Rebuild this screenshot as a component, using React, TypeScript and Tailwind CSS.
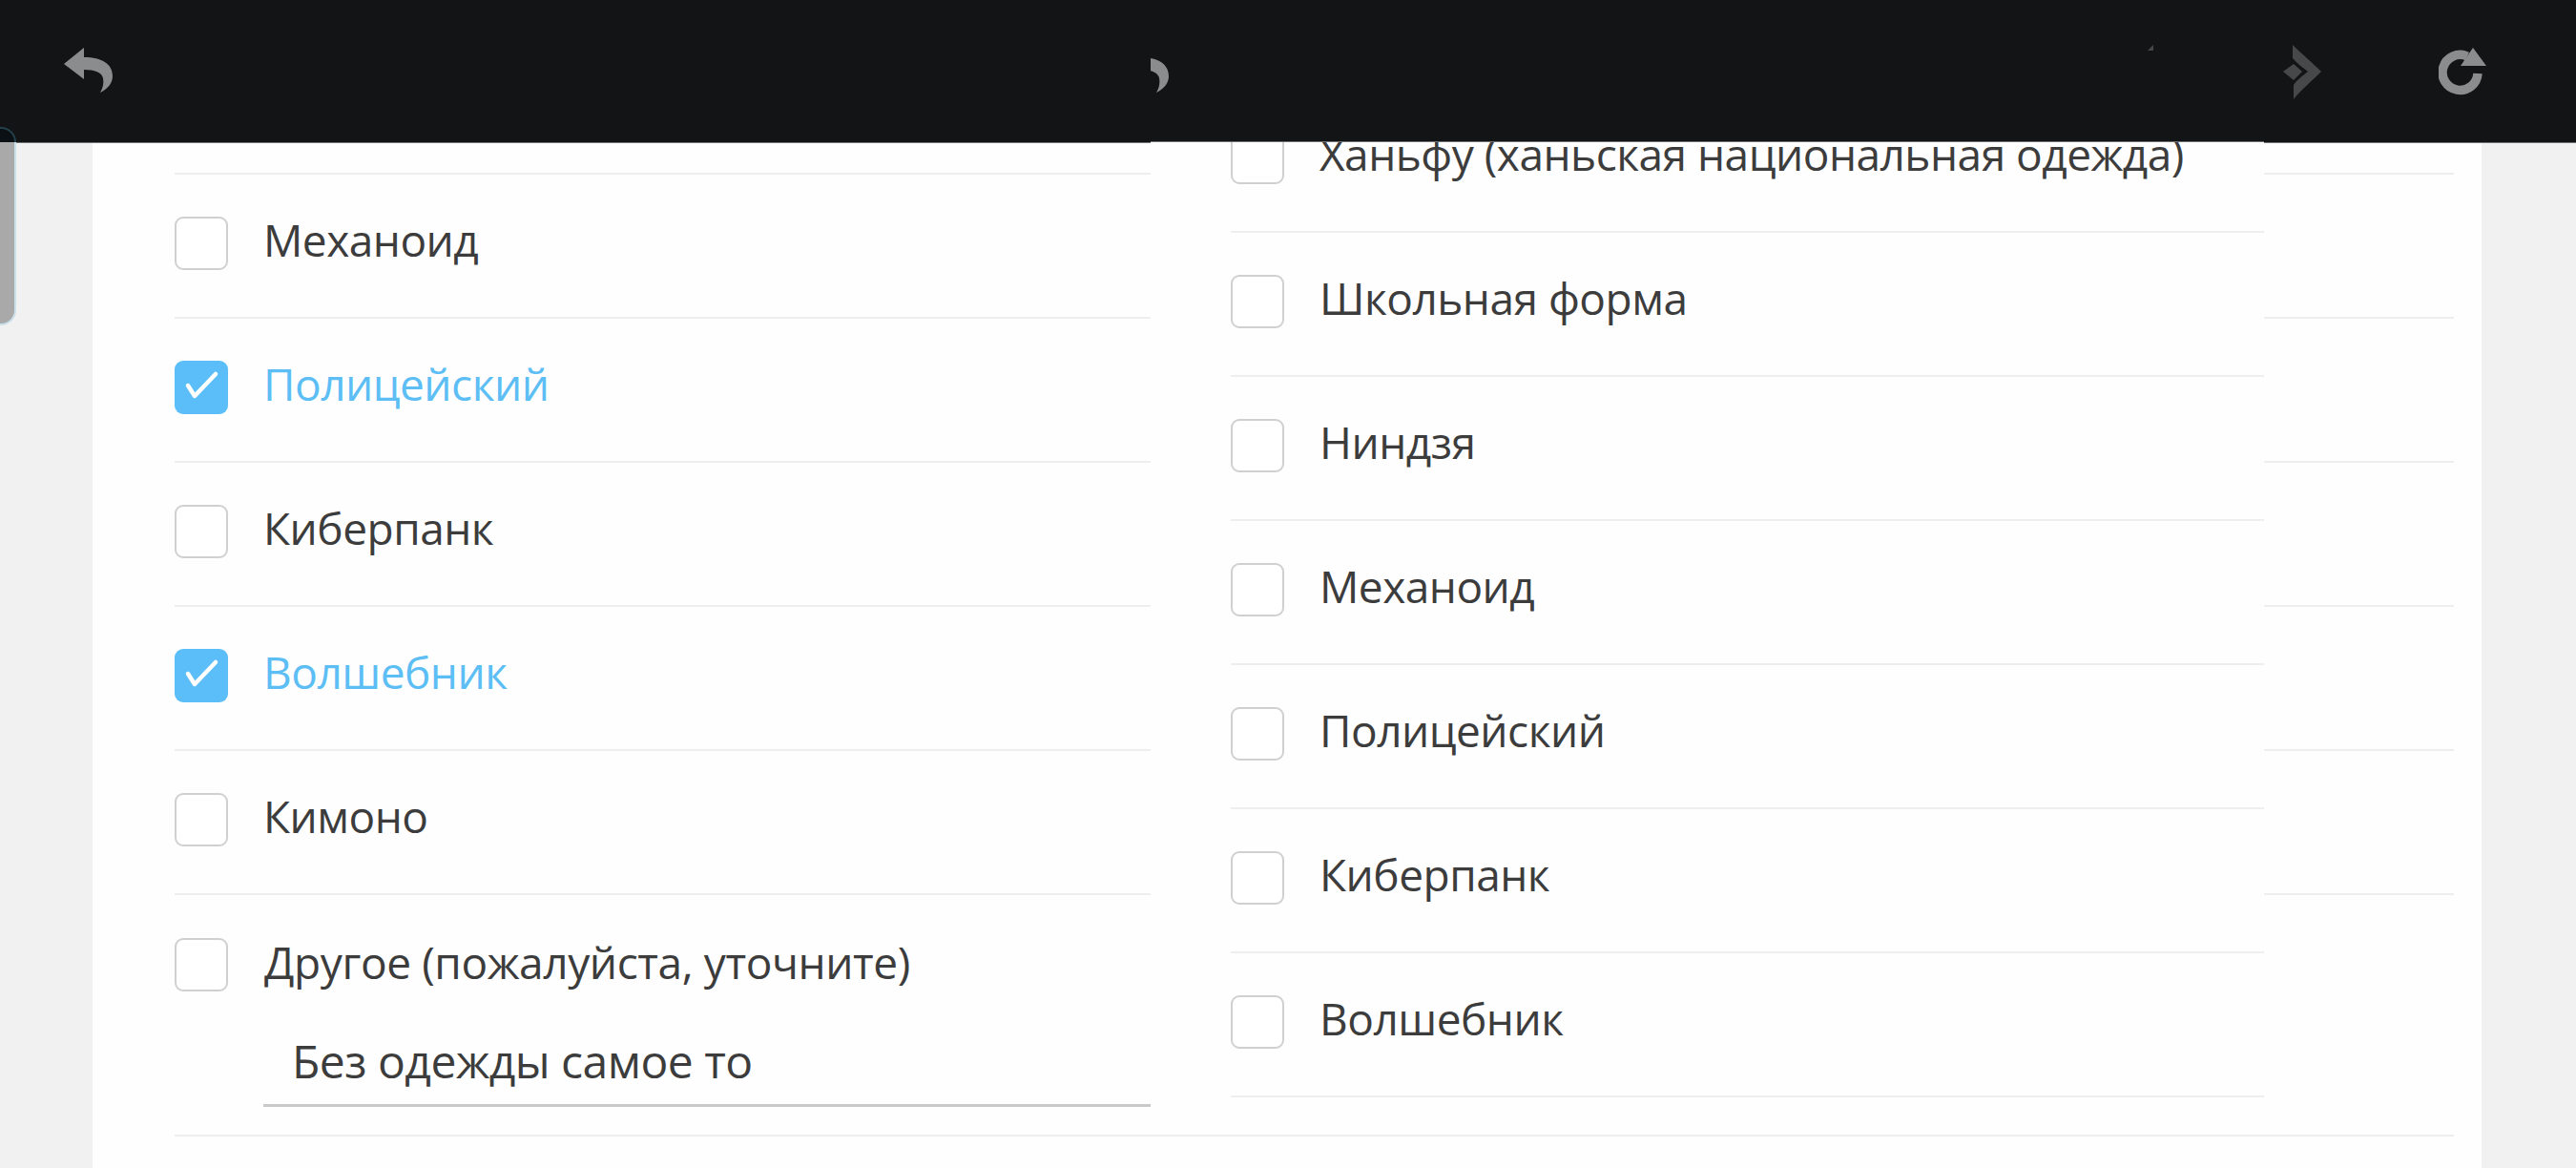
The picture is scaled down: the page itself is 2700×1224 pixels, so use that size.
import React from "react";

const FONT = "font-['Open_Sans','Noto_Sans',sans-serif]";

function BackIcon() {
  return (
    <svg viewBox="0 0 52 48" className="block w-[52px] h-[48px] shrink-0" fill="#8b8c8e">
      <path d="M0 17 L21 0 L21 10 C40 10 51 17 51 30 C51 37 46 43 38 47 C41 42 42 37 41 32 C40 26 32 23 21 23 L21 33 Z" />
    </svg>
  );
}

function ForwardIcon() {
  return (
    <svg viewBox="0 0 42 58" className="block w-[42px] h-[58px] shrink-0" fill="#47484a">
      <path d="M10 0 C18 8 32 20 40 28 C32 36 18 48 11 57 L11 42 C14 37 21 32 26 28 C21 24 14 19 10 14 Z" />
      <path d="M0 28 L11 20 L20 28 L11 37 Z" />
    </svg>
  );
}

function RefreshIcon() {
  return (
    <svg viewBox="0 0 50 50" className="block w-[50px] h-[50px] shrink-0" fill="none">
      <path d="M41 27 A18.5 18.5 0 1 1 30 9" stroke="#8b8c8e" strokeWidth="9.5" />
      <path d="M36 0 L50 19 L23 19 Z" fill="#8b8c8e" />
    </svg>
  );
}

function Box({ checked }: { checked?: boolean }) {
  if (checked) {
    return (
      <span className="block w-[56px] h-[56px] shrink-0 rounded-[9px] bg-[#5bbef8]">
        <svg viewBox="0 0 56 56" className="block w-[56px] h-[56px]" fill="none">
          <path d="M14 26 L21 37 L43 14" stroke="#ffffff" strokeWidth="4.5" strokeLinecap="round" strokeLinejoin="round" />
        </svg>
      </span>
    );
  }
  return <span className="block w-[56px] h-[56px] shrink-0 rounded-[9px] border-2 border-[#d0d0d0] bg-white" />;
}

function Row({ label, checked }: { label: string; checked?: boolean }) {
  return (
    <div className="flex items-center gap-[37px] h-[151px] pb-[5px] border-b-2 border-[#eeeeee]">
      <Box checked={checked} />
      <span className={`mb-[9px] text-[46px] leading-[56px] tracking-[-0.5px] whitespace-nowrap ${checked ? "text-[#5dbef5]" : "text-[#3c3c3c]"}`}>{label}</span>
    </div>
  );
}

const LEFT: [string, boolean][] = [
  ["Механоид", false],
  ["Полицейский", true],
  ["Киберпанк", false],
  ["Волшебник", true],
  ["Кимоно", false],
];

const RIGHT = ["Ханьфу (ханьская национальная одежда)", "Школьная форма", "Ниндзя", "Механоид", "Полицейский", "Киберпанк", "Волшебник"];

export default function App() {
  return (
    <div className={`relative w-[2700px] h-[1224px] overflow-hidden bg-[#f1f1f1] flex flex-col ${FONT}`}>
      {/* Base top bar */}
      <header className="h-[150px] shrink-0 bg-[#131416] border-b border-[#6f7071] flex items-start pt-[50px] pl-[67px]">
        <BackIcon />
        <div className="ml-[2274px] -mt-[3px]">
          <ForwardIcon />
        </div>
        <div className="ml-[121px]">
          <RefreshIcon />
        </div>
      </header>

      {/* Base page card */}
      <main className="flex-1 mx-[97px] w-[2504px] bg-[#fefefe] pl-[86px] pr-[29px]">
        <div className="h-[33px] border-b-2 border-[#eeeeee]" />
        {LEFT.map(([label, checked]) => (
          <Row key={label} label={label} checked={checked} />
        ))}
        <div className="h-[253px] pt-[42px] border-b-2 border-[#eeeeee]">
          <div className="flex items-center gap-[38px]">
            <Box />
            <span className="mb-[5px] text-[46px] leading-[56px] tracking-[-0.4px] text-[#3c3c3c]">Другое (пожалуйста, уточните)</span>
          </div>
          <div className="ml-[93px] mt-[44px] w-[930px] h-[75px] pl-[30px] pb-[18px] flex items-center border-b-[3px] border-[#c9c9c9] text-[48px] leading-[56px] tracking-[-0.5px] text-[#3c3c3c]">
            Без одежды самое то
          </div>
        </div>
      </main>

      {/* Side scroll handle */}
      <div className="absolute left-0 top-[133px] w-[17px] h-[208px] flex flex-col">
        <div className="h-[16px] shrink-0 bg-[#0a1013] border-t-2 border-r-2 border-[#24424d] rounded-tr-[16px]" />
        <div className="flex-1 bg-[#a9a9a9] border-r-2 border-b-2 border-[#cbe0ea] rounded-br-[16px]" />
      </div>

      {/* Overlapping dropdown panel */}
      <section className="absolute left-[1206px] top-0 w-[1167px] h-[1166px] bg-[#fefefe] overflow-hidden flex flex-col">
        <div className="relative z-10 h-[149px] shrink-0 overflow-hidden bg-[#131416] border-b border-[#6f7071]">
          <div className="absolute -left-[32px] top-[50px]">
            <BackIcon />
          </div>
          <svg viewBox="0 0 10 6" className="absolute left-[1045px] top-[47px] w-[10px] h-[6px]" fill="#47484a">
            <path d="M0 6 L6 0 L6 6 Z" />
          </svg>
        </div>
        <div className="-mt-[56px] pl-[84px]">
          {RIGHT.map((label) => (
            <Row key={label} label={label} />
          ))}
        </div>
      </section>
    </div>
  );
}
